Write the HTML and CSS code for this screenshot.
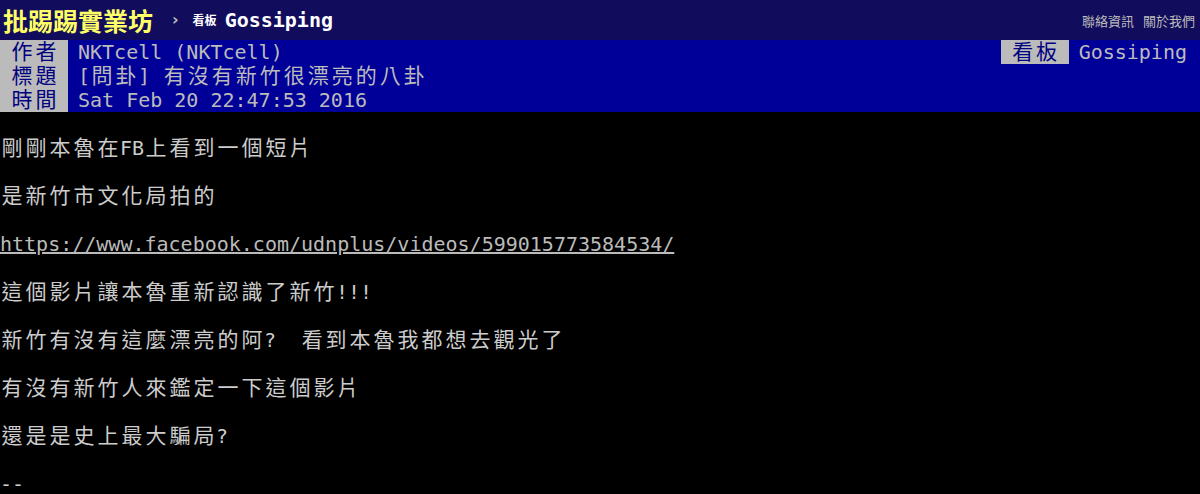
FILE: index.html
```
<!DOCTYPE html>
<html lang="zh-Hant">
<head>
<meta charset="utf-8">
<title>[問卦] 有沒有新竹很漂亮的八卦 - 看板 Gossiping - 批踢踢實業坊</title>
<link rel="stylesheet" href="styles.css">
</head>
<body>
<div class="topbar">
  <a class="logo" href="#">批踢踢實業坊</a>
  <span class="sep">›</span>
  <a class="board" href="#"><span class="board-label">看板</span>Gossiping</a>
  <div class="links">
    <a href="#">聯絡資訊</a>
    <a href="#">關於我們</a>
  </div>
</div>
<div class="main">
  <div class="meta">
    <div class="meta-row">
      <span class="meta-tag"><span class="c">作者</span></span>
      <span class="meta-value">NKTcell (NKTcell)</span>
      <span class="meta-right">
        <span class="meta-tag"><span class="c">看板</span></span>
        <span class="meta-value">Gossiping</span>
      </span>
    </div>
    <div class="meta-row">
      <span class="meta-tag"><span class="c">標題</span></span>
      <span class="meta-value">[<span class="c">問卦</span>] <span class="c">有沒有新竹很漂亮的八卦</span></span>
    </div>
    <div class="meta-row">
      <span class="meta-tag"><span class="c">時間</span></span>
      <span class="meta-value">Sat Feb 20 22:47:53 2016</span>
    </div>
  </div>
  <div class="content">
    <div class="line"></div>
    <div class="line"><span class="c">剛剛本魯在</span>FB<span class="c">上看到一個短片</span></div>
    <div class="line"></div>
    <div class="line"><span class="c">是新竹市文化局拍的</span></div>
    <div class="line"></div>
    <div class="line"><a class="url" href="#">https://www.facebook.com/udnplus/videos/599015773584534/</a></div>
    <div class="line"></div>
    <div class="line"><span class="c">這個影片讓本魯重新認識了新竹</span>!!!</div>
    <div class="line"></div>
    <div class="line"><span class="c">新竹有沒有這麼漂亮的阿</span>?  <span class="c">看到本魯我都想去觀光了</span></div>
    <div class="line"></div>
    <div class="line"><span class="c">有沒有新竹人來鑑定一下這個影片</span></div>
    <div class="line"></div>
    <div class="line"><span class="c">還是是史上最大騙局</span>?</div>
    <div class="line"></div>
    <div class="line">--</div>
  </div>
</div>
</body>
</html>
```
FILE: styles.css
```
html, body {
  margin: 0;
  padding: 0;
  background: #000;
}

body {
  color: #ccc;
  font-family: "DejaVu Sans Mono", "Noto Sans CJK TC", monospace;
  font-size: 20px;
  overflow: hidden;
}

a {
  text-decoration: none;
}

/* CJK runs: ~21px glyphs centred in 24px cells */
.c {
  font-family: "Noto Sans CJK TC", sans-serif;
  font-size: 21px;
  line-height: 16px;
  letter-spacing: 3px;
  padding-left: 1.5px;
  margin-right: -1.5px;
}

.topbar {
  height: 40px;
  background: #110c5c;
  display: flex;
  align-items: center;
  font-family: "Noto Sans CJK TC", sans-serif;
}

.logo {
  color: #ffff66;
  font-size: 25px;
  font-weight: bold;
  margin-left: 3px;
  line-height: 40px;
}

.sep {
  color: #bbb;
  font-family: "DejaVu Sans", sans-serif;
  font-weight: bold;
  font-size: 16px;
  margin-left: 19px;
  margin-right: 14px;
  line-height: 40px;
}

.board {
  color: #fff;
  font-family: "DejaVu Sans Mono", monospace;
  font-weight: bold;
  font-size: 20px;
  line-height: 40px;
  white-space: pre;
}

.board-label {
  font-family: "Noto Sans CJK TC", sans-serif;
  font-size: 12px;
  font-weight: bold;
  vertical-align: 2px;
  margin-right: 8px;
}

.links {
  margin-left: auto;
  margin-right: 5px;
  display: flex;
  gap: 9px;
  font-size: 13px;
}

.links a {
  color: #bbb;
}

.meta {
  background: #000098;
}

.meta-row {
  display: flex;
  height: 24px;
  line-height: 24px;
  white-space: pre;
}

.meta-tag {
  background: #bbb;
  color: #000080;
  padding: 0 10px;
}

.meta-value {
  color: #bbb;
  margin-left: 10px;
}

.meta-right {
  margin-left: auto;
  margin-right: 13px;
  display: flex;
}

.line {
  height: 24px;
  line-height: 24px;
  white-space: pre;
}

.url {
  color: #bbb;
  text-decoration: underline;
}
```
